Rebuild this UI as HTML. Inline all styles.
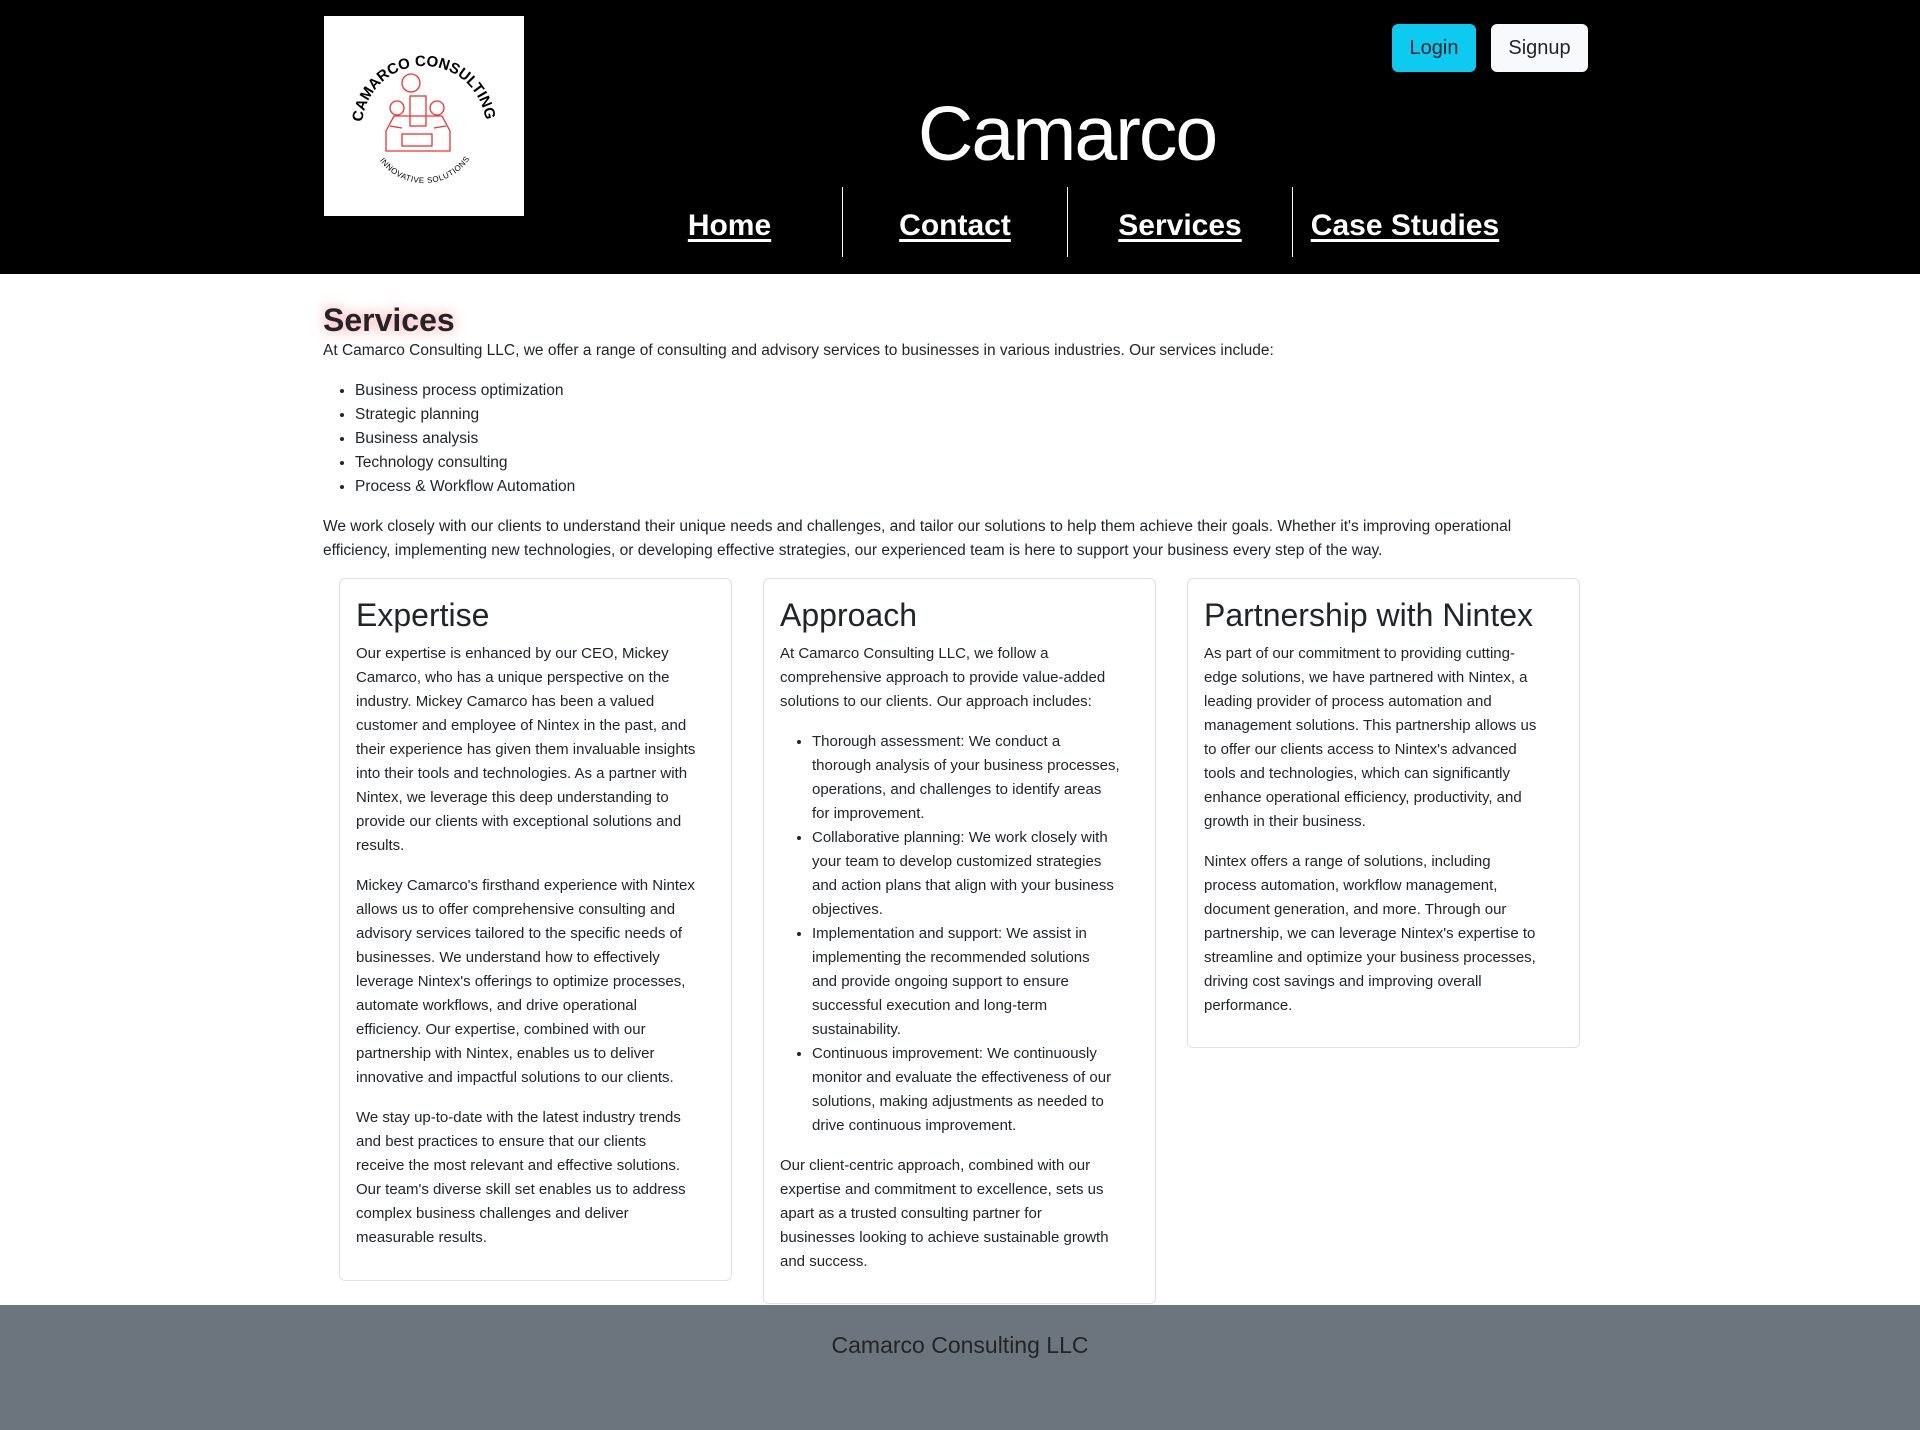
<!DOCTYPE html>
<html><head><meta charset="utf-8"><style>
*{box-sizing:border-box;margin:0;padding:0}
body{width:1920px;height:1430px;background:#fff;font-family:"Liberation Sans",sans-serif;color:#212529;position:relative;overflow:hidden}
header{position:absolute;left:0;top:0;width:1920px;height:274px;background:#000}
.logo{position:absolute;left:324px;top:16px;width:200px;height:200px;background:#fff}
.btn{position:absolute;top:24px;height:48px;border-radius:6px;font-size:20px;line-height:48px;text-align:center;color:#212529}
.title{position:absolute;left:817px;width:500px;top:84px;text-align:center;color:#fff;font-size:77px;letter-spacing:-2px;font-weight:300;line-height:100px}
.nav{position:absolute;top:187px;height:70px;width:225px;text-align:center;line-height:78px}
.nav a{color:#fff;font-weight:bold;font-size:30px;text-decoration:underline;text-underline-offset:4px}
.bl{border-left:1px solid #fff}
main{position:absolute;left:323px;top:301px;width:1270px;font-size:15.5px;line-height:24px}
h1{font-size:32px;font-weight:600;line-height:38px;text-shadow:0 0 12px rgba(255,80,80,.6);display:inline-block}
p{margin-bottom:16px;white-space:nowrap}
ul{padding-left:32px;margin-bottom:16px;white-space:nowrap}
.card{position:absolute;top:578px;width:393px;border:1px solid #dee2e6;border-radius:6px;padding:17px 16px 16px;font-size:15px;line-height:24px}
.card h2{font-size:32px;font-weight:500;line-height:38px;margin-bottom:8px}
footer{position:absolute;left:0;top:1305px;width:1920px;height:125px;background:#6c757d;text-align:center;font-size:23px;line-height:80px;color:#212529;font-weight:500}
</style></head><body>
<header>
<div class="logo"><svg width="200" height="200" viewBox="0 0 200 200">
<defs><path id="t" d="M38,112 A62,62 0 1 1 162,112"/><path id="b" d="M48,130 A55,55 0 0 0 152,130"/></defs>
<text font-family="Liberation Sans" font-weight="bold" font-size="15" fill="#000"><textPath href="#t" startOffset="3%">CAMARCO CONSULTING</textPath></text>
<text font-family="Liberation Sans" font-size="8" fill="#000" letter-spacing="0.5"><textPath href="#b" startOffset="12%">INNOVATIVE SOLUTIONS</textPath></text>
<g fill="none" stroke="#e33" stroke-width="1.3">
<circle cx="87" cy="67" r="9"/><circle cx="73" cy="92" r="7"/><circle cx="113" cy="92" r="7"/>
<rect x="86" y="80" width="16" height="30"/><path d="M62,115 L70,100 L118,100 L126,115 L126,135 L62,135 Z"/>
<rect x="78" y="118" width="30" height="12"/><path d="M66,110 L78,112 M110,112 L122,110"/>
</g></svg></div>
<div class="btn" style="left:1392px;width:84px;background:#0dcaf0">Login</div>
<div class="btn" style="left:1491px;width:97px;background:#f8f9fa">Signup</div>
<div class="title">Camarco</div>
<div class="nav" style="left:617px"><a>Home</a></div>
<div class="nav bl" style="left:842px"><a>Contact</a></div>
<div class="nav bl" style="left:1067px"><a>Services</a></div>
<div class="nav bl" style="left:1292px"><a>Case Studies</a></div>
</header>
<main>
<h1>Services</h1>
<p>At Camarco Consulting LLC, we offer a range of consulting and advisory services to businesses in various industries. Our services include:</p>
<ul><li>Business process optimization</li><li>Strategic planning</li><li>Business analysis</li><li>Technology consulting</li><li>Process &amp; Workflow Automation</li></ul>
<p>We work closely with our clients to understand their unique needs and challenges, and tailor our solutions to help them achieve their goals. Whether it's improving operational<br>efficiency, implementing new technologies, or developing effective strategies, our experienced team is here to support your business every step of the way.</p>
</main>
<div class="card" style="left:339px;height:703px">
<h2>Expertise</h2>
<p>Our expertise is enhanced by our CEO, Mickey<br>Camarco, who has a unique perspective on the<br>industry. Mickey Camarco has been a valued<br>customer and employee of Nintex in the past, and<br>their experience has given them invaluable insights<br>into their tools and technologies. As a partner with<br>Nintex, we leverage this deep understanding to<br>provide our clients with exceptional solutions and<br>results.</p>
<p>Mickey Camarco's firsthand experience with Nintex<br>allows us to offer comprehensive consulting and<br>advisory services tailored to the specific needs of<br>businesses. We understand how to effectively<br>leverage Nintex's offerings to optimize processes,<br>automate workflows, and drive operational<br>efficiency. Our expertise, combined with our<br>partnership with Nintex, enables us to deliver<br>innovative and impactful solutions to our clients.</p>
<p>We stay up-to-date with the latest industry trends<br>and best practices to ensure that our clients<br>receive the most relevant and effective solutions.<br>Our team's diverse skill set enables us to address<br>complex business challenges and deliver<br>measurable results.</p>
</div>
<div class="card" style="left:763px;height:726px">
<h2>Approach</h2>
<p>At Camarco Consulting LLC, we follow a<br>comprehensive approach to provide value-added<br>solutions to our clients. Our approach includes:</p>
<ul><li>Thorough assessment: We conduct a<br>thorough analysis of your business processes,<br>operations, and challenges to identify areas<br>for improvement.</li>
<li>Collaborative planning: We work closely with<br>your team to develop customized strategies<br>and action plans that align with your business<br>objectives.</li>
<li>Implementation and support: We assist in<br>implementing the recommended solutions<br>and provide ongoing support to ensure<br>successful execution and long-term<br>sustainability.</li>
<li>Continuous improvement: We continuously<br>monitor and evaluate the effectiveness of our<br>solutions, making adjustments as needed to<br>drive continuous improvement.</li></ul>
<p>Our client-centric approach, combined with our<br>expertise and commitment to excellence, sets us<br>apart as a trusted consulting partner for<br>businesses looking to achieve sustainable growth<br>and success.</p>
</div>
<div class="card" style="left:1187px;height:470px">
<h2>Partnership with Nintex</h2>
<p>As part of our commitment to providing cutting-<br>edge solutions, we have partnered with Nintex, a<br>leading provider of process automation and<br>management solutions. This partnership allows us<br>to offer our clients access to Nintex's advanced<br>tools and technologies, which can significantly<br>enhance operational efficiency, productivity, and<br>growth in their business.</p>
<p>Nintex offers a range of solutions, including<br>process automation, workflow management,<br>document generation, and more. Through our<br>partnership, we can leverage Nintex's expertise to<br>streamline and optimize your business processes,<br>driving cost savings and improving overall<br>performance.</p>
</div>
<footer>Camarco Consulting LLC</footer>
</body></html>
